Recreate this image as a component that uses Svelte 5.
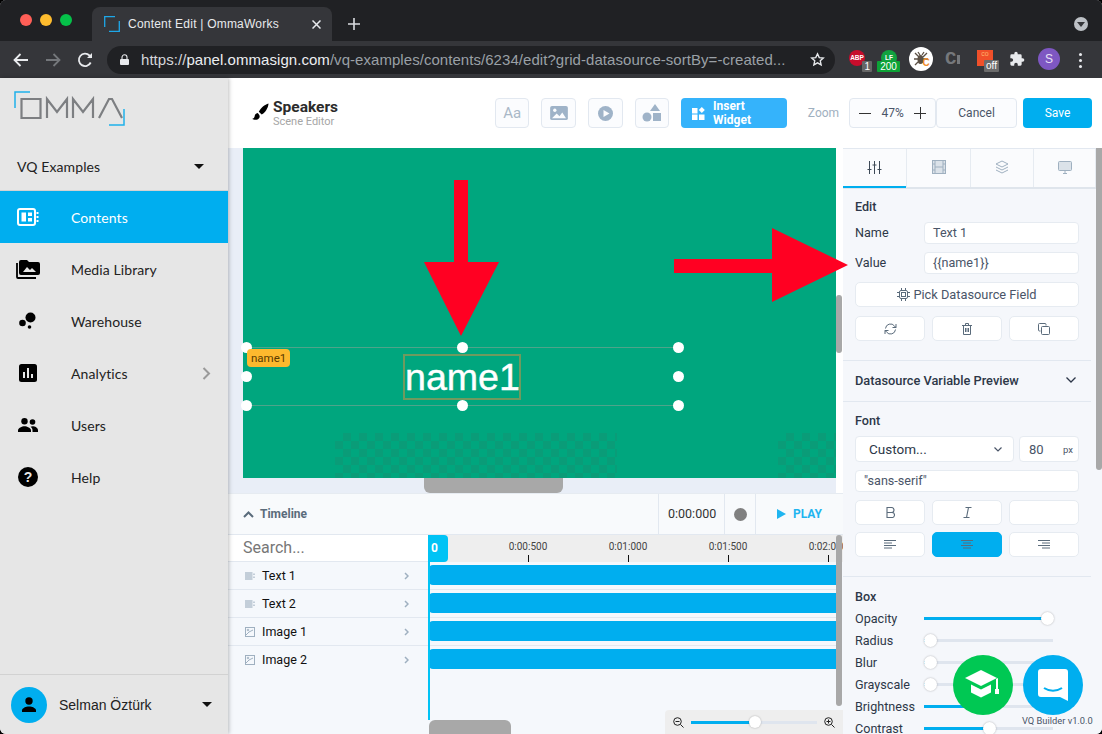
<script lang="ts">
	const navItems = [
		{ label: 'Contents', icon: 'contents', active: true },
		{ label: 'Media Library', icon: 'media' },
		{ label: 'Warehouse', icon: 'warehouse' },
		{ label: 'Analytics', icon: 'analytics', more: true },
		{ label: 'Users', icon: 'users' },
		{ label: 'Help', icon: 'help' }
	];
	const layers = [
		{ name: 'Text 1', kind: 'text' },
		{ name: 'Text 2', kind: 'text' },
		{ name: 'Image 1', kind: 'image' },
		{ name: 'Image 2', kind: 'image' }
	];
	const ticks = ['0:00:500', '0:01:000', '0:01:500', '0:02:000'];
	const sliders = [
		{ label: 'Opacity', value: 100 },
		{ label: 'Radius', value: 0 },
		{ label: 'Blur', value: 0 },
		{ label: 'Grayscale', value: 0 },
		{ label: 'Brightness', value: 50 },
		{ label: 'Contrast', value: 50 }
	];
	const handles = [
		[0, 0], [216, 0], [432, 0],
		[0, 29], [432, 29],
		[0, 58], [216, 58], [432, 58]
	];
</script>

<div class="window">
	<header class="chrome">
		<div class="tabstrip">
			<div class="lights"><i class="red"></i><i class="amber"></i><i class="green"></i></div>
			<div class="tab">
				<svg width="16" height="16" viewBox="0 0 16 16" fill="none" stroke="#1ea7e8" stroke-width="1.3"><path d="M.7 11V.7H11" /><path d="M5 15.3h10.3V5" /></svg>
				<span>Content Edit | OmmaWorks</span>
				<svg class="close" width="9" height="9" viewBox="0 0 9 9" stroke="#e8eaed" stroke-width="1.5"><path d="M.5.5l8 8M8.5.5l-8 8" /></svg>
			</div>
			<svg class="newtab" width="12" height="12" viewBox="0 0 12 12" stroke="#dadce0" stroke-width="1.6"><path d="M6 0v12M0 6h12" /></svg>
			<div class="tabmenu"><i></i></div>
		</div>
		<div class="toolbar">
			<svg class="nav-ic" width="16" height="14" viewBox="0 0 16 14" fill="none" stroke="#e8eaed" stroke-width="1.8"><path d="M15 7H2M7.500 1L1.500 7l6 6" /></svg>
			<svg class="nav-ic" width="16" height="14" viewBox="0 0 16 14" fill="none" stroke="#74777b" stroke-width="1.8"><path d="M1 7h13M8.500 1l6 6-6 6" /></svg>
			<svg class="nav-ic" width="16" height="16" viewBox="0 0 16 16" fill="none" stroke="#e8eaed" stroke-width="1.800"><path d="M13.700 10.500A6.200 6.200 0 1 1 12.500 3.500L14.500 5.500" /><path d="M15 1v5h-5" fill="#e8eaed" stroke="none" /></svg>
			<div class="omnibox">
				<svg width="9" height="11" viewBox="0 0 9 11"><path d="M1 5h7a1 1 0 0 1 1 1v4a1 1 0 0 1-1 1H1a1 1 0 0 1-1-1V6a1 1 0 0 1 1-1z" fill="#e8eaed" /><path d="M2 5V3.300a2.500 2.500 0 0 1 5 0V5" fill="none" stroke="#e8eaed" stroke-width="1.100" /></svg>
				<p class="url"><span class="dim-a">https://</span><span class="host">panel.ommasign.com</span><span class="dim">/vq-examples/contents/6234/edit?grid-datasource-sortBy=-created...</span></p>
				<svg class="star" width="15" height="15" viewBox="0 0 24 24" fill="none" stroke="#e8eaed" stroke-width="2.200"><path d="M12 3l2.800 6 6.500.7-4.900 4.400 1.400 6.500L12 17.300l-5.800 3.300 1.400-6.500-4.900-4.400 6.500-.7z" /></svg>
			</div>
			<div class="extensions">
				<div class="ext ext-abp"><span class="dot-abp">ABP</span><b>1</b></div>
				<div class="ext ext-lf"><span class="dot-lf">LF</span><b>200</b></div>
				<div class="ext-bug">
					<svg width="24" height="24" viewBox="0 0 24 24"><circle cx="12" cy="12" r="12" fill="#fff" /><g stroke="#5b5045" stroke-width="1.300" fill="none"><path d="M6 6l4 4M18 6l-4 4M5 12h14M6 18l3-3M9 5l2 3M15 5l-2 3" /></g><ellipse cx="11.500" cy="12.500" rx="3" ry="4.500" fill="#5b5045" /><text x="13.500" y="19" font-size="10" font-weight="700" fill="#f08c2c" font-family="Liberation Sans">C</text></svg>
				</div>
				<span class="ext-c">C<i></i></span>
				<div class="ext ext-co"><span class="co-box">co</span><b>off</b></div>
				<svg class="puzzle" width="16" height="16" viewBox="0 0 24 24" fill="#e8eaed"><path d="M20.500 11H19V7a2 2 0 0 0-2-2h-4V3.500a2.500 2.500 0 0 0-5 0V5H4a2 2 0 0 0-2 2v3.800h1.500a2.700 2.700 0 0 1 0 5.400H2V20a2 2 0 0 0 2 2h3.800v-1.500a2.700 2.700 0 0 1 5.400 0V22H17a2 2 0 0 0 2-2v-4h1.500a2.500 2.500 0 0 0 0-5z" /></svg>
				<span class="avatar">S</span>
				<span class="kebab"><i></i><i></i><i></i></span>
			</div>
		</div>
	</header>

	<div class="app">
		<aside class="sidebar">
			<div class="logo">
				<svg width="112" height="36" viewBox="0 0 112 36" fill="none">
					<path d="M1 17V1h15M110 18v16H95" stroke="#1fb1ea" stroke-width="1.500" />
					<path d="M7.500 8h19v19h-19zM33 27V8l10 13L53 8v19M59 27V8l10 13L79 8v19M85 27L95 8h3l10 19" stroke="#7d7f82" stroke-width="2.200" />
				</svg>
			</div>
			<div class="org"><span>VQ Examples</span><i class="caret"></i></div>
			<nav>
				{#each navItems as item}
					<div class="nav-item" class:active={item.active}>
						<span class="nav-icon">
							{#if item.icon === 'contents'}
								<svg width="22" height="18" viewBox="0 0 22 18"><rect x="1" y="1" width="17" height="16" rx="2" fill="none" stroke="#fff" stroke-width="2" /><path d="M4.500 4.500h4.500v9H4.500zM11 4.500h4v3.500h-4zM11 10h4v3.500h-4z" fill="#fff" /><path d="M19.500 4h2v2h-2zM19.500 8h2v2h-2zM19.500 12h2v2h-2z" fill="#fff" /></svg>
							{:else if item.icon === 'media'}
								<svg width="24" height="20" viewBox="0 0 24 20"><path d="M1 4v14a1 1 0 0 0 1 1h18" fill="none" stroke="#000" stroke-width="1.800" /><path d="M5 1h6l2 2h9a2 2 0 0 1 2 2v9a2 2 0 0 1-2 2H5a2 2 0 0 1-2-2V3a2 2 0 0 1 2-2z" /><path d="M7 13l4-5 3 3 2-2 4 4z" fill="#e6e6e6" /></svg>
							{:else if item.icon === 'warehouse'}
								<svg width="18" height="18" viewBox="0 0 18 18"><circle cx="11.500" cy="5.500" r="5" /><circle cx="3.500" cy="11" r="3.300" /><circle cx="10.500" cy="15" r="1.800" /></svg>
							{:else if item.icon === 'analytics'}
								<svg width="18" height="18" viewBox="0 0 18 18"><rect width="18" height="18" rx="2.500" /><path d="M4 8h2v6H4zM8 4h2v10H8zM12 10h2v4h-2z" fill="#e6e6e6" /></svg>
							{:else if item.icon === 'users'}
								<svg width="20" height="14" viewBox="0 0 20 14"><circle cx="6.500" cy="3.200" r="3.200" /><circle cx="14.500" cy="4" r="2.800" /><path d="M0 14v-1.500C0 10 4 8.300 6.500 8.300S13 10 13 12.500V14z" /><path d="M14.500 8.300c2.500 0 5.500 1.500 5.500 4V14h-5.500v-1.500c0-1.700-.7-3-2-3.700.7-.3 1.400-.5 2-.5z" /></svg>
							{:else}
								<svg width="20" height="20" viewBox="0 0 20 20"><circle cx="10" cy="10" r="10" /><text x="10" y="15" text-anchor="middle" font-size="14" font-weight="700" fill="#e6e6e6" font-family="Liberation Sans">?</text></svg>
							{/if}
						</span>
						<span class="nav-label">{item.label}</span>
						{#if item.more}
							<svg class="nav-more" width="9" height="13" viewBox="0 0 9 13" fill="none" stroke="#9a9a9a" stroke-width="2"><path d="M1.500 1l5.500 5.500L1.500 12" /></svg>
						{/if}
					</div>
				{/each}
			</nav>
			<div class="user">
				<span class="user-pic">
					<svg width="16" height="16" viewBox="0 0 16 16"><circle cx="8" cy="4" r="3.700" /><path d="M1 15v-1.500C1 11 5 9.500 8 9.500s7 1.500 7 4V15z" /></svg>
				</span>
				<span class="user-name">Selman Öztürk</span>
				<i class="caret"></i>
			</div>
		</aside>

		<main class="main">
			<div class="topbar">
				<svg class="brush" width="17" height="20" viewBox="0 0 17 20"><path d="M16.500.5C13 1.500 8.500 5 6.800 8.800l2.900 2.700C13 10 16.500 4.500 16.500.5z" /><path d="M5.800 10c-2.300.3-3 2-3.200 3.500-.2 1.200-1.100 2-2.300 2.300 1 1 5 1.800 6.700-.5 1-1.400.8-2.700.1-3.500z" /></svg>
				<div class="title">
					<strong>Speakers</strong>
					<small>Scene Editor</small>
				</div>
				<div class="tools">
					<button class="tool aa">Aa</button>
					<button class="tool" aria-label="Image">
						<svg width="18" height="14" viewBox="0 0 19 15"><rect width="19" height="15" rx="2" fill="#9fb3c8" /><circle cx="5" cy="4.500" r="1.800" fill="#fbfcfe" /><path d="M2 13l5-5 3 3 3-4 4 6z" fill="#fbfcfe" /></svg>
					</button>
					<button class="tool" aria-label="Video">
						<svg width="15" height="15" viewBox="0 0 15 15"><circle cx="7.500" cy="7.500" r="7.500" fill="#9fb3c8" /><path d="M5.500 4l6 3.500-6 3.500z" fill="#fbfcfe" /></svg>
					</button>
					<button class="tool" aria-label="Shapes">
						<svg width="20" height="20" viewBox="0 0 20 20" fill="#9fb3c8"><path d="M13 1l5 7H8z" /><circle cx="5" cy="14" r="4.500" /><rect x="11" y="10" width="8" height="8" /></svg>
					</button>
					<button class="insert">
						<svg width="13" height="13" viewBox="0 0 13 13" fill="#fff"><path d="M0 1h5.500v5.500H0zM0 7.500h5.500V13H0zM7 7.500h5.500V13H7z" /><path d="M9.800 0l3 3-3 3-3-3z" /></svg>
						<span>Insert<br />Widget</span>
					</button>
				</div>
				<span class="zoom-label">Zoom</span>
				<div class="zoom-box">
					<svg width="12" height="12" viewBox="0 0 12 12" stroke="#333"><path d="M0 6.500h12" /></svg>
					<span>47%</span>
					<svg width="12" height="12" viewBox="0 0 12 12" stroke="#333"><path d="M0 6.500h12M6.500 0v12" /></svg>
				</div>
				<button class="cancel">Cancel</button>
				<button class="save">Save</button>
			</div>

			<div class="workspace">
				<section class="center">
					<div class="stage">
						<div class="scene">
							<div class="checks checks-a"></div>
							<div class="checks checks-b"></div>
							<div class="selection">
								<div class="text-box">name1</div>
								{#each handles as h}
									<i class="handle" style="left:{h[0]}px;top:{h[1]}px"></i>
								{/each}
							</div>
							<span class="var-badge">name1</span>
						</div>
						<div class="stage-hscroll"><i></i></div>
						<i class="stage-vscroll"></i>
					</div>

					<div class="timeline">
						<div class="tl-head">
							<svg width="11" height="7" viewBox="0 0 11 7" fill="none" stroke="#5a6b7b" stroke-width="2"><path d="M1 6l4.500-4.500L10 6" /></svg>
							<span class="tl-title">Timeline</span>
							<span class="tl-time">0:00:000</span>
							<span class="tl-rec"><i></i></span>
							<span class="tl-play">
								<svg width="9" height="10" viewBox="0 0 9 10" fill="#1fb5f0"><path d="M0 0l9 5-9 5z" /></svg>
								PLAY
							</span>
						</div>
						<div class="tl-body">
							<div class="tl-left">
								<div class="search">Search...</div>
								{#each layers as layer}
									<div class="layer">
										{#if layer.kind === 'text'}
											<svg width="10" height="8" viewBox="0 0 10 8" fill="#c3ced9"><path d="M0 0h7.500v8H0zM8 1.500h2v1.500H8zM8 4.500h2V6H8z" /></svg>
										{:else}
											<svg width="10" height="10" viewBox="0 0 10 10" fill="none" stroke="#9fb0c0"><rect x=".5" y=".5" width="9" height="9" /><path d="M1 8l3-3 4-2" /><circle cx="3" cy="3" r=".8" /></svg>
										{/if}
										<span>{layer.name}</span>
										<svg class="layer-more" width="5" height="8" viewBox="0 0 5 8" fill="none" stroke="#9fb0c0" stroke-width="1.500"><path d="M1 1l3 3-3 3" /></svg>
									</div>
								{/each}
							</div>
							<div class="tl-right">
								<div class="ruler">
									{#each ticks as tick}
										<div class="tick"><span>{tick}</span><i></i></div>
									{/each}
								</div>
								<div class="playtag">0</div>
								{#each layers as layer}
									<div class="track"><i></i></div>
								{/each}
								<i class="playline"></i>
								<i class="tl-vscroll"></i>
							</div>
						</div>
						<div class="tl-foot">
							<i class="tl-hscroll"></i>
							<div class="tl-zoom">
								<svg width="11" height="11" viewBox="0 0 11 11" fill="none" stroke="#222"><circle cx="4.500" cy="4.500" r="3.800" /><path d="M7.500 7.500L10.500 10.500M2.500 4.500h4" /></svg>
								<div class="tl-slider"><i></i><b></b></div>
								<svg width="11" height="11" viewBox="0 0 11 11" fill="none" stroke="#222"><circle cx="4.500" cy="4.500" r="3.800" /><path d="M7.500 7.500L10.500 10.500M2.500 4.500h4M4.500 2.500v4" /></svg>
							</div>
						</div>
					</div>
				</section>

				<section class="panel">
					<div class="tabs">
						<div class="ptab on">
							<svg width="15" height="13" viewBox="0 0 15 13" fill="none" stroke="#3e4a57"><path d="M2.500 0v13M7.500 0v13M12.500 0v13M.5 8.500h4M5.500 4h4M10.500 8.500h4" /></svg>
						</div>
						<div class="ptab">
							<svg width="14" height="14" viewBox="0 0 14 14" fill="#dbe2e9" stroke="#9fb0c0"><rect x=".5" y=".5" width="13" height="13" /><path d="M3 .5v13M11 .5v13M3 7h8M.5 4H3M.5 10H3M11 4h2.500M11 10h2.500" /></svg>
						</div>
						<div class="ptab">
							<svg width="14" height="14" viewBox="0 0 14 14" fill="none" stroke="#9fb0c0"><path d="M7 1l6 3-6 3-6-3zM1 7l6 3 6-3M1 10l6 3 6-3" /></svg>
						</div>
						<div class="ptab">
							<svg width="14" height="13" viewBox="0 0 14 13" fill="#dbe2e9" stroke="#9fb0c0"><rect x=".5" y=".5" width="13" height="9" rx="1" /><path d="M5 12.500h4M7 10v2" /></svg>
						</div>
					</div>

					<div class="group edit">
						<h3>Edit</h3>
						<div class="field"><label for="n">Name</label><div id="n" class="input">Text 1</div></div>
						<div class="field"><label for="v">Value</label><div id="v" class="input">{'{{name1}}'}</div></div>
						<button class="wide">
							<svg width="13" height="13" viewBox="0 0 13 13" fill="none" stroke="#5a6b7b"><rect x="2.500" y="2.500" width="8" height="8" rx="1.500" /><rect x="4.500" y="4.500" width="4" height="4" /><path d="M4.500 0v2.500M8.500 0v2.500M4.500 10.500V13M8.500 10.500V13M0 4.500h2.500M0 8.500h2.500M10.500 4.500H13M10.500 8.500H13" /></svg>
							Pick Datasource Field
						</button>
						<div class="triple">
							<button aria-label="Refresh"><svg width="13" height="12" viewBox="0 0 13 12" fill="none" stroke="#5a6b7b"><path d="M1.500 5.500A5 5 0 0 1 10.500 3L12 4.500M11.500 6.500A5 5 0 0 1 2.500 9L1 7.500" /><path d="M12 1v3.500H8.500M1 11V7.500h3.500" /></svg></button>
							<button aria-label="Delete"><svg width="10" height="12" viewBox="0 0 10 12" fill="none" stroke="#5a6b7b"><path d="M0 2.500h10M3.500 2.500V.5h3v2M1.500 2.500v9h7v-9M3.500 5v4M5 5v4M6.500 5v4" /></svg></button>
							<button aria-label="Copy"><svg width="12" height="12" viewBox="0 0 12 12" fill="none" stroke="#5a6b7b"><path d="M8 2.500V1.500a1 1 0 0 0-1-1H1.500a1 1 0 0 0-1 1V7a1 1 0 0 0 1 1h1" /><rect x="3.500" y="3.500" width="8" height="8" rx="1" /></svg></button>
						</div>
					</div>

					<div class="group preview">
						<h3>Datasource Variable Preview</h3>
						<svg width="10" height="6" viewBox="0 0 10 6" fill="none" stroke="#2d3748" stroke-width="1.300"><path d="M.5.500L5 5l4.500-4.500" /></svg>
					</div>

					<div class="group font">
						<h3>Font</h3>
						<div class="font-row">
							<div class="select"><span>Custom...</span><svg width="8" height="5" viewBox="0 0 8 5" fill="none" stroke="#4a5568" stroke-width="1.200"><path d="M.5.500L4 4 7.500.5" /></svg></div>
							<div class="size"><span>80</span><small>px</small></div>
						</div>
						<div class="input family">"sans-serif"</div>
						<div class="triple">
							<button aria-label="Bold"><svg width="9" height="11" viewBox="0 0 9 11" fill="none" stroke="#5a6b7b" stroke-width="1.100"><path d="M1 .5h4.500a2.500 2.500 0 0 1 0 5H1zM1 5.500h5a2.500 2.500 0 0 1 0 5H1z" /></svg></button>
							<button aria-label="Italic"><svg width="9" height="11" viewBox="0 0 9 11" fill="none" stroke="#5a6b7b" stroke-width="1.100"><path d="M2.500.5h6M.5 10.500h6M5.500.5l-2 10" /></svg></button>
							<button aria-label="Underline"></button>
						</div>
						<div class="triple">
							<button aria-label="Align left"><svg width="12" height="9" viewBox="0 0 12 9" stroke="#5a6b7b"><path d="M0 .5h12M0 3h8M0 5.500h12M0 8h8" /></svg></button>
							<button class="picked" aria-label="Align center"><svg width="12" height="9" viewBox="0 0 12 9" stroke="#5a6b7b"><path d="M0 .5h12M2 3h8M0 5.500h12M2 8h8" /></svg></button>
							<button aria-label="Align right"><svg width="12" height="9" viewBox="0 0 12 9" stroke="#5a6b7b"><path d="M0 .5h12M4 3h8M0 5.500h12M4 8h8" /></svg></button>
						</div>
					</div>

					<div class="group box">
						<h3>Box</h3>
						{#each sliders as s}
							<div class="slider-row">
								<span>{s.label}</span>
								<div class="slider" style="--v:{s.value}"><i></i><b></b></div>
							</div>
						{/each}
					</div>
					<i class="panel-scroll"></i>
				</section>
			</div>
		</main>
	</div>

	<svg class="arrows" width="1102" height="734" viewBox="0 0 1102 734" fill="#ff0022">
		<path d="M454 180h14v82h31l-38 74-37-74h30z" />
		<path d="M674 259h98v-31l76 37-76 37v-29h-98z" />
	</svg>
	<div class="fab fab-green">
		<svg width="36" height="30" viewBox="0 0 36 30" fill="#fff"><path d="M16 0L0 8l16 8 16-8z" /><path d="M6 14.500v8l10 5 10-5v-8l-10 5z" /><path d="M31 9v10h2V8z" /><path d="M30 19h4v5h-4z" /></svg>
	</div>
	<div class="fab fab-blue">
		<svg width="30" height="32" viewBox="0 0 30 32"><path d="M3 0h24a3 3 0 0 1 3 3v29l-8-4H3a3 3 0 0 1-3-3V3a3 3 0 0 1 3-3z" fill="#fff" /><path d="M6 19c5 3.500 13 3.500 18 0" fill="none" stroke="#00aeef" stroke-width="2" /></svg>
	</div>
	<span class="version">VQ Builder v1.0.0</span>
</div>

<style>
	:global(body) {
		background: #000;
	}

	.window {
		position: relative;
		width: 1102px;
		height: 734px;
		overflow: hidden;
		border-radius: 6px;
		font-family: Roboto, 'Liberation Sans', sans-serif;
		color: #2d3748;
		background: #fff;
	}

	button {
		font-family: inherit;
		cursor: pointer;
		padding: 0;
	}

	i {
		display: block;
	}

	/* browser chrome */
	.chrome {
		height: 78px;
		background: #35363a;
	}

	.tabstrip {
		display: flex;
		align-items: flex-end;
		height: 41px;
		background: #202124;
	}

	.lights {
		display: flex;
		gap: 8px;
		width: 92px;
		height: 39px;
		padding: 14px 0 0 20px;
		box-sizing: border-box;
		align-self: flex-start;
	}

	.lights i {
		width: 12px;
		height: 12px;
		border-radius: 50%;
	}

	.red { background: #ff5f57; }
	.amber { background: #febc2e; }
	.green { background: #05c149; }

	.tab {
		display: flex;
		align-items: center;
		width: 240px;
		height: 34px;
		box-sizing: border-box;
		padding: 0 11px 0 12px;
		background: #35363a;
		border-radius: 8px 8px 0 0;
		color: #e8eaed;
		font: 12px 'Liberation Sans', Arimo, sans-serif;
	}

	.tab span {
		margin-left: 8px;
		flex: 1;
		letter-spacing: 0.22px;
	}

	.newtab {
		margin: 0 0 11px 16px;
	}

	.tabmenu {
		margin: 0 14px 11px auto;
		width: 14px;
		height: 14px;
		border-radius: 50%;
		background: #bdc1c6;
		position: relative;
		top: 1px;
	}

	.tabmenu i {
		margin: 5px 0 0 3px;
		width: 0;
		height: 0;
		border: 4px solid transparent;
		border-top: 5px solid #35363a;
		border-bottom: 0;
	}

	.toolbar {
		display: flex;
		align-items: center;
		height: 37px;
		padding-left: 13px;
	}

	.nav-ic {
		flex: none;
		margin-right: 16px;
	}

	.nav-ic:nth-child(3) {
		margin-right: 14px;
	}

	.omnibox {
		display: flex;
		align-items: center;
		width: 728px;
		height: 28px;
		box-sizing: border-box;
		padding: 0 10px 0 13px;
		border-radius: 14px;
		background: #202124;
		font: 15px 'Liberation Sans', sans-serif;
		flex: none;
	}

	.url {
		margin: 0 0 0 12px;
		flex: 1;
		white-space: nowrap;
		overflow: hidden;
		letter-spacing: 0.05px;
	}

	.dim-a { color: #d5d7da; }
	.host { color: #eceef1; }
	.dim { color: #9aa0a6; }

	.extensions {
		position: relative;
		flex: 1;
		height: 37px;
	}

	.ext {
		position: absolute;
		top: 9px;
		height: 22px;
		color: #fff;
		font: 700 9px 'Liberation Sans', sans-serif;
	}

	.ext b {
		position: absolute;
		bottom: 0;
		right: 0;
		padding: 0 2px;
		height: 11px;
		line-height: 11px;
		border-radius: 1px;
		background: #666;
		font-weight: 400;
		font-size: 10px;
	}

	.ext-abp { left: 14px; width: 23px; }
	.ext-lf { left: 42px; width: 23px; }
	.ext-co { left: 142px; width: 22px; }

	.dot-abp,
	.dot-lf {
		display: block;
		width: 16px;
		height: 16px;
		border-radius: 50%;
		background: #c70d2c;
		text-align: center;
		line-height: 16px;
		font-size: 6.500px;
	}

	.dot-lf {
		margin-left: 4px;
		background: #11a23f;
	}

	.ext-lf b {
		background: #0da336;
		left: 0;
		text-align: center;
	}

	.ext-bug {
		position: absolute;
		left: 74px;
		top: 6px;
		height: 24px;
	}

	.ext-c {
		position: absolute;
		left: 110px;
		top: 9px;
		color: #75787c;
		font: 700 19px/19px 'Liberation Mono', monospace;
	}

	.ext-c i {
		position: absolute;
		left: 12px;
		top: 5px;
		width: 3px;
		height: 9px;
		background: #75787c;
	}

	.co-box {
		display: block;
		width: 16px;
		height: 16px;
		background: #f0502a;
		color: #ffb06a;
		font-size: 7px;
		font-weight: 400;
		text-align: center;
	}

	.ext-co b {
		background: #6b6b6b;
		height: 12px;
		right: 0;
	}

	.puzzle {
		position: absolute;
		left: 174px;
		top: 10px;
	}

	.avatar {
		position: absolute;
		left: 203px;
		top: 7px;
		width: 22px;
		height: 22px;
		border-radius: 50%;
		background: #7e57c2;
		color: #e8e0f5;
		font: 12px/22px 'Liberation Sans', sans-serif;
		text-align: center;
	}

	.kebab {
		position: absolute;
		left: 244px;
		top: 12px;
		display: grid;
		gap: 3px;
	}

	.kebab i {
		width: 3px;
		height: 3px;
		border-radius: 50%;
		background: #e8eaed;
	}

	.app {
		display: flex;
		height: 656px;
	}

	/* sidebar */
	.sidebar {
		position: relative;
		z-index: 2;
		display: flex;
		flex-direction: column;
		flex: none;
		width: 228px;
		background: #e6e6e6;
		box-shadow: 1px 0 4px rgba(0, 0, 0, 0.25);
		font-family: Lato, sans-serif;
		color: #222;
	}

	.logo {
		height: 70px;
		box-sizing: border-box;
		padding: 13px 0 0 14px;
	}

	.org {
		display: flex;
		align-items: center;
		justify-content: space-between;
		height: 43px;
		box-sizing: border-box;
		padding: 0 24px 6px 17px;
		border-bottom: 1px solid #d2d2d2;
		font-size: 14px;
		letter-spacing: 0.1px;
	}

	.caret {
		width: 0;
		height: 0;
		border: 5px solid transparent;
		border-top: 5px solid #111;
		border-bottom: 0;
	}

	nav {
		flex: 1;
	}

	.nav-item {
		display: flex;
		align-items: center;
		height: 52px;
		font-size: 14px;
		letter-spacing: 0.1px;
	}

	.nav-item.active {
		background: #00aeef;
		color: #fff;
	}

	.nav-icon {
		display: flex;
		justify-content: center;
		width: 55px;
		margin-right: 16px;
		line-height: 0;
	}

	.nav-label {
		flex: 1;
	}

	.nav-more {
		margin-right: 17px;
	}

	.user {
		display: flex;
		align-items: center;
		height: 60px;
		box-sizing: border-box;
		padding: 0 16px 0 11px;
		border-top: 1px solid #d2d2d2;
		font: 14px 'Liberation Sans', sans-serif;
	}

	.user-pic {
		display: flex;
		align-items: center;
		justify-content: center;
		width: 36px;
		height: 36px;
		margin-right: 12px;
		border-radius: 50%;
		background: #00aeef;
	}

	.user-name {
		flex: 1;
	}

	/* top bar */
	.main {
		display: flex;
		flex-direction: column;
		flex: 1;
		min-width: 0;
	}

	.topbar {
		display: flex;
		align-items: center;
		flex: none;
		height: 70px;
		box-sizing: border-box;
		padding: 0 10px 0 24px;
		background: #fff;
	}

	.brush {
		flex: none;
		margin-right: 4px;
	}

	.title {
		display: grid;
		width: 222px;
		line-height: 1;
	}

	.title strong {
		margin-top: 1px;
		font-size: 15.500px;
		font-weight: 700;
		color: #2b2b2b;
	}

	.title small {
		margin-top: 1px;
		font-size: 11px;
		color: #a6a6a6;
	}

	.tools {
		display: flex;
		gap: 12px;
		width: 292px;
		flex: none;
	}

	.tool {
		display: flex;
		align-items: center;
		justify-content: center;
		width: 34.670px;
		height: 30px;
		background: #fbfcfe;
		border: 1px solid #e2e8f0;
		border-radius: 4px;
	}

	.aa {
		font-size: 15px;
		color: #a9b8c7;
	}

	.insert {
		display: flex;
		align-items: center;
		gap: 8px;
		width: 106px;
		height: 30px;
		padding-left: 11px;
		background: #35b3fb;
		border: 0;
		border-radius: 4px;
		color: #fff;
		font-size: 12px;
		font-weight: 700;
		line-height: 14px;
		text-align: left;
	}

	.zoom-label {
		margin: 0 10px 0 21px;
		font-size: 12px;
		color: #9fb0c0;
	}

	.zoom-box {
		display: flex;
		align-items: center;
		justify-content: space-between;
		width: 87px;
		height: 30px;
		box-sizing: border-box;
		padding: 0 9px;
		background: #fbfcfe;
		border: 1px solid #e2e8f0;
		border-radius: 4px;
		font-size: 12px;
		color: #4a5568;
	}

	.cancel,
	.save {
		height: 30px;
		font-size: 12px;
		border-radius: 4px;
	}

	.cancel {
		width: 81px;
		background: #fbfcfe;
		border: 1px solid #e2e8f0;
		color: #4a5568;
	}

	.save {
		width: 69px;
		margin-left: 6px;
		border: 0;
		background: #00aeef;
		color: #fff;
	}

	.workspace {
		display: flex;
		flex: 1;
		min-height: 0;
	}

	/* stage */
	.center {
		display: flex;
		flex-direction: column;
		flex: none;
		width: 615px;
	}

	.stage {
		position: relative;
		flex: none;
		height: 345px;
		padding: 0 7px 0 15px;
		background: #e9eef7;
		box-sizing: border-box;
		box-shadow: inset -7px 0 0 #fff;
	}

	.scene {
		position: relative;
		height: 330px;
		background: #00a67e;
		font-family: 'Liberation Sans', sans-serif;
	}

	.checks {
		position: absolute;
		bottom: 0;
		height: 45px;
		background: repeating-conic-gradient(#0a9c78 0 25%, transparent 0 50%) 0 0 / 16px 16px;
	}

	.checks-a {
		left: 92px;
		width: 282px;
	}

	.checks-b {
		left: 535px;
		width: 58px;
	}

	.selection {
		position: absolute;
		left: 3px;
		top: 199px;
		width: 432px;
		height: 59px;
		border-top: 1px solid #4ea48a;
		border-bottom: 1px solid #4ea48a;
		box-sizing: border-box;
	}

	.text-box {
		position: absolute;
		left: 157px;
		top: 6px;
		width: 118px;
		height: 46px;
		box-sizing: border-box;
		border: 2px solid #6f9a5f;
		color: #fff;
		font-size: 37.600px;
		line-height: 43px;
		text-align: center;
		-webkit-text-stroke: 0.4px #fff;
	}

	.handle {
		position: absolute;
		width: 11px;
		height: 11px;
		margin: -6px 0 0 -5.500px;
		border-radius: 50%;
		background: #fff;
	}

	.var-badge {
		position: absolute;
		left: 4px;
		top: 201px;
		padding: 0 4px;
		height: 18px;
		background: #fdb92e;
		border-radius: 4px;
		font: 11.500px/18px Roboto, sans-serif;
		color: #5a3b00;
	}

	.stage-hscroll {
		height: 15px;
	}

	.stage-hscroll i {
		margin-left: 181px;
		width: 139px;
		height: 15px;
		border-radius: 0 0 6px 6px;
		background: #a8a8a8;
	}

	.stage-vscroll {
		position: absolute;
		right: 1px;
		top: 147px;
		width: 6px;
		height: 58px;
		border-radius: 3px;
		background: #a8a8a8;
	}

	/* timeline */
	.timeline {
		display: flex;
		flex-direction: column;
		flex: 1;
		background: #f5f8fc;
		min-height: 0;
	}

	.tl-head {
		display: flex;
		align-items: center;
		flex: none;
		height: 42px;
		box-sizing: border-box;
		padding-left: 15px;
		background: #f8fafc;
		border-top: 1px solid #e6ebf1;
		border-bottom: 1px solid #e2e8f0;
		font-size: 12px;
	}

	.tl-title {
		flex: 1;
		margin-left: 6px;
		font-weight: 700;
		color: #5a6b7b;
	}

	.tl-time {
		width: 66px;
		height: 40px;
		box-sizing: border-box;
		line-height: 40px;
		padding-left: 9px;
		border-left: 1px solid #e2e8f0;
		color: #333;
		font-size: 12.500px;
	}

	.tl-rec {
		display: flex;
		align-items: center;
		justify-content: center;
		width: 30px;
		height: 40px;
		border-left: 1px solid #e2e8f0;
		border-right: 1px solid #e2e8f0;
	}

	.tl-rec i {
		width: 13px;
		height: 13px;
		border-radius: 50%;
		background: #808080;
	}

	.tl-play {
		display: flex;
		align-items: center;
		justify-content: center;
		gap: 7px;
		width: 87px;
		color: #1fb5f0;
		font-weight: 700;
	}

	.tl-body {
		display: flex;
		flex: none;
		height: 185px;
	}

	.tl-left {
		flex: none;
		width: 200px;
	}

	.search {
		height: 26px;
		padding-left: 15px;
		background: #fff;
		font-size: 16px;
		line-height: 26px;
		color: #777;
		border-bottom: 1px solid #e2e8f0;
	}

	.layer {
		display: flex;
		align-items: center;
		height: 27px;
		padding-left: 17px;
		border-bottom: 1px solid #e2e8f0;
		font-size: 12.500px;
		color: #111;
	}

	.layer:last-child {
		border-bottom: 0;
	}

	.layer span {
		margin-left: 7px;
		flex: 1;
	}

	.layer-more {
		margin-right: 19px;
	}

	.tl-right {
		position: relative;
		flex: 1;
		overflow: hidden;
	}

	.ruler {
		display: flex;
		height: 27px;
		padding-left: 50px;
		background: #eee;
		overflow: hidden;
	}

	.tick {
		position: relative;
		flex: none;
		width: 100px;
		height: 27px;
		text-align: center;
		font-size: 10px;
		line-height: 24px;
		color: #444;
	}

	.tick i {
		position: absolute;
		left: 50px;
		bottom: 0;
		width: 1px;
		height: 7px;
		background: #111;
	}

	.playtag {
		position: absolute;
		left: 0;
		top: 0;
		width: 20px;
		height: 27px;
		background: #00c3f5;
		border-radius: 0 4px 4px 0;
		color: #fff;
		font-size: 12px;
		font-weight: 700;
		line-height: 27px;
		text-indent: 3px;
	}

	.playline {
		position: absolute;
		left: 0;
		top: 0;
		width: 2px;
		height: 185px;
		background: #00c3f5;
	}

	.track {
		padding-top: 3px;
		height: 24px;
		border-bottom: 1px solid #e2e8f0;
		margin-right: 7px;
	}

	.track:last-of-type {
		border-bottom: 0;
	}

	.track i {
		margin-left: 1px;
		height: 20px;
		background: #00aeef;
		border-radius: 4px 0 0 4px;
	}

	.tl-vscroll {
		position: absolute;
		right: 1px;
		top: 0;
		width: 6px;
		height: 171px;
		border-radius: 3px;
		background: #a8a8a8;
	}

	.tl-foot {
		position: relative;
		flex: 1;
		min-height: 0;
	}

	.tl-hscroll {
		position: absolute;
		left: 201px;
		top: 0;
		width: 82px;
		height: 14px;
		border-radius: 6px 6px 0 0;
		background: #a8a8a8;
	}

	.tl-zoom {
		position: absolute;
		left: 437px;
		bottom: 0;
		display: flex;
		align-items: center;
		gap: 7px;
		width: 178px;
		height: 24px;
		box-sizing: border-box;
		padding: 0 8px;
		background: #eee;
		border-radius: 4px 0 0 0;
	}

	.tl-slider {
		position: relative;
		flex: 1;
		height: 3px;
		background: #dfe5ee;
	}

	.tl-slider i {
		width: 63px;
		height: 3px;
		background: #00aeef;
	}

	.tl-slider b {
		position: absolute;
		left: 58px;
		top: -5px;
		width: 12px;
		height: 12px;
		border-radius: 50%;
		background: #fff;
		box-shadow: 0 0 2px rgba(0, 0, 0, 0.3);
	}

	/* right panel */
	.panel {
		position: relative;
		flex: 1;
		box-sizing: border-box;
		padding-right: 11px;
		background: #f5f7fb;
		font-size: 12.600px;
		overflow: hidden;
	}

	.tabs {
		display: grid;
		grid-template-columns: 64px 64px 63px 62px;
		height: 41px;
		margin: 0 -5px -1px 0;
		background: #fafbfd;
		border-top: 1px solid #e2e8f0;
		border-bottom: 2px solid #dfe5ec;
		box-sizing: border-box;
	}

	.ptab {
		display: flex;
		align-items: center;
		justify-content: center;
		border-right: 1px solid #e6ebf1;
		padding-bottom: 2px;
	}

	.ptab.on {
		box-shadow: inset 0 -2px 0 #00aeef;
		margin-bottom: -1px;
	}

	.group {
		padding: 0 12px;
		border-bottom: 1px solid #e2e8f0;
	}

	h3 {
		margin: 0;
		font-size: 12.600px;
		font-weight: 500;
		color: #2d3748;
	}

	.edit {
		height: 173px;
		box-sizing: border-box;
		padding-top: 11px;
	}

	.field {
		display: flex;
		align-items: center;
		height: 22px;
		margin-top: 8px;
	}

	.field label {
		width: 69px;
		flex: none;
		color: #2d3748;
		position: relative;
		top: -1px;
	}

	.input {
		flex: 1;
		height: 22px;
		box-sizing: border-box;
		padding-left: 8px;
		line-height: 20px;
		background: #fff;
		border: 1px solid #e6ebf1;
		border-radius: 4px;
		color: #4a5568;
	}

	.wide {
		display: flex;
		align-items: center;
		justify-content: center;
		gap: 3px;
		width: 100%;
		height: 25px;
		margin-top: 8px;
		background: #fff;
		border: 1px solid #e6ebf1;
		border-radius: 5px;
		font-size: 12.800px;
		color: #4a5568;
	}

	.triple {
		display: grid;
		grid-template-columns: repeat(3, 70px);
		gap: 7px;
		margin-top: 9px;
	}

	.triple button {
		display: flex;
		align-items: center;
		justify-content: center;
		height: 25px;
		background: #fff;
		border: 1px solid #e6ebf1;
		border-radius: 5px;
	}

	.triple button.picked {
		background: #00aeef;
		border-color: #00aeef;
	}

	.preview {
		display: flex;
		align-items: center;
		justify-content: space-between;
		height: 41px;
		box-sizing: border-box;
		padding: 0 15px 2px 12px;
	}

	.preview h3 {
		font-size: 12.800px;
	}

	.font {
		height: 175px;
		box-sizing: border-box;
		padding-top: 11px;
	}

	.font-row {
		display: flex;
		gap: 5px;
		margin-top: 8px;
	}

	.select {
		display: flex;
		align-items: center;
		justify-content: space-between;
		width: 159px;
		height: 26px;
		box-sizing: border-box;
		padding: 0 11px 0 13px;
		background: #fff;
		border: 1px solid #e6ebf1;
		border-radius: 4px;
		font-size: 13.500px;
		color: #2d3748;
	}

	.size {
		display: flex;
		align-items: center;
		justify-content: space-between;
		width: 60px;
		height: 26px;
		box-sizing: border-box;
		padding: 0 5px 0 9px;
		background: #fff;
		border: 1px solid #e6ebf1;
		border-radius: 4px;
		font-size: 13px;
		color: #4a5568;
	}

	.size small {
		font-size: 9.500px;
	}

	.family {
		height: 22px;
		margin-top: 8px;
		flex: none;
	}

	.font .triple {
		margin-top: 7px;
	}

	.font .family + .triple {
		margin-top: 8px;
	}

	.box {
		border: 0;
		padding-top: 12px;
	}

	.slider-row {
		display: flex;
		align-items: center;
		height: 22px;
		color: #2d3748;
	}

	.box h3 + .slider-row {
		margin-top: 3px;
	}

	.slider-row span {
		width: 69px;
		flex: none;
	}

	.slider {
		position: relative;
		width: 129px;
		height: 3px;
		background: #dfe5ee;
	}

	/* knob runs 6px inside each end of the track */
	.slider i {
		width: calc(6px + var(--v) * 1.17px);
		height: 3px;
		background: #00aeef;
	}

	.slider b {
		position: absolute;
		top: -5px;
		left: calc(6px + var(--v) * 1.17px);
		width: 13px;
		height: 13px;
		margin-left: -6px;
		border-radius: 50%;
		background: #fff;
		box-shadow: 0 0 2px rgba(0, 0, 0, 0.3);
	}

	.panel-scroll {
		position: absolute;
		right: 0;
		top: 0;
		width: 6px;
		height: 322px;
		background: #a8a8a8;
		border-radius: 0 0 3px 3px;
	}

	/* overlays */
	.arrows {
		position: absolute;
		left: 0;
		top: 0;
		pointer-events: none;
	}

	.fab {
		position: absolute;
		top: 655px;
		display: flex;
		align-items: center;
		justify-content: center;
		width: 60px;
		height: 60px;
		border-radius: 50%;
	}

	.fab-green {
		left: 953px;
		background: #00c853;
	}

	.fab-blue {
		left: 1023px;
		background: #00aeef;
	}

	.version {
		position: absolute;
		left: 1022px;
		top: 715px;
		font-size: 9.300px;
		color: #4a5568;
	}
</style>
